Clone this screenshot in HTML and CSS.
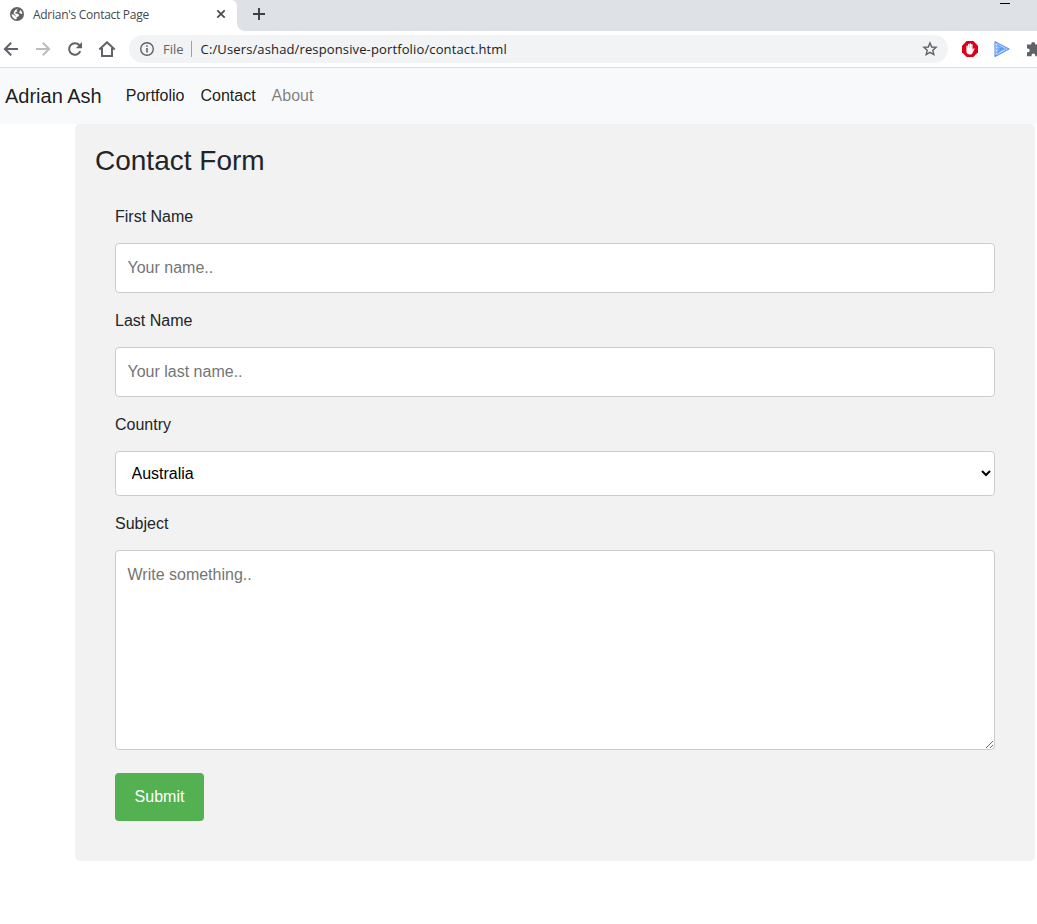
FILE: index.html
```html
<!DOCTYPE html>
<html lang="en">
<head>
<meta charset="utf-8">
<title>Adrian's Contact Page</title>
<link rel="stylesheet" href="styles.css">
</head>
<body>
<div class="tabstrip">
  <div class="tab">
    <svg class="globe" width="14" height="14" viewBox="0 0 14 14"><circle cx="7" cy="7" r="7" fill="#5f6368"/><path d="M8.300 1.500 6.600 3 7.500 4.500 5.600 5.100 5.200 6.500 8 6.700 9.200 8.200 8 9.700 6.800 10.100 6.500 12.300C4 12.200 1.800 10 1.600 7.200L4.200 7.700 5.100 9.400 5.800 8.900 4.400 6.900 3.600 6.500C4 4 5.400 2 8.300 1.500ZM10.200 2.900C11.800 4 12.400 5.600 12.300 6.900L10.500 6.400 9.100 6Z" fill="#fff"/></svg>
    <span class="tab-title">Adrian's Contact Page</span>
    <svg class="close" width="10" height="10" viewBox="0 0 10 10"><path d="M1.3 1.3 8.7 8.7M8.7 1.3 1.3 8.7" stroke="#46494d" stroke-width="1.7"/></svg>
  </div>
  <div class="strip">
    <svg width="12" height="12" viewBox="0 0 12 12"><path d="M6 0V12M0 6H12" stroke="#3c4043" stroke-width="1.9"/></svg>
    <span class="minimize"></span>
  </div>
</div>
<div class="toolbar">
  <div class="nav-buttons">
    <svg width="16" height="16" viewBox="0 0 16 16"><path d="M15 8H2M8.2 1.7 1.900 8l6.300 6.300" fill="none" stroke="#5f6368" stroke-width="2"/></svg>
    <svg width="16" height="16" viewBox="0 0 16 16"><path d="M1 8h13M7.800 1.700 14.100 8l-6.300 6.300" fill="none" stroke="#babcbe" stroke-width="2"/></svg>
    <svg width="16" height="16" viewBox="0 0 16 16"><path d="M13.300 10.200A5.800 5.800 0 1 1 12.400 4.200L14 5.800" fill="none" stroke="#5f6368" stroke-width="2"/><path d="M15 1v6.200H8.800Z" fill="#5f6368"/></svg>
    <svg width="18" height="16" viewBox="0 0 18 16"><path d="M1.300 8.600 9 1.300l7.700 7.300M4 7v8h10V7" fill="none" stroke="#5f6368" stroke-width="2"/></svg>
  </div>
  <div class="address">
    <svg width="14" height="14" viewBox="0 0 14 14"><circle cx="7" cy="7" r="6.300" fill="none" stroke="#5f6368" stroke-width="1.400"/><path d="M7 6v4.500M7 3.300v1.500" stroke="#5f6368" stroke-width="1.600"/></svg>
    <span class="scheme">File</span>
    <span class="divider"></span>
    <span class="url">C:/Users/ashad/responsive-portfolio/contact.html</span>
    <svg class="star" width="16" height="16" viewBox="0 0 16 16"><path d="m8 1.900 1.700 4.100 4.400.4-3.300 2.900 1 4.300L8 11.300l-3.800 2.300 1-4.300-3.300-2.900 4.400-.4Z" fill="none" stroke="#5f6368" stroke-width="1.400"/></svg>
  </div>
  <div class="extensions">
    <svg width="16" height="16" viewBox="0 0 16 16"><path d="M4.700 0h6.600L16 4.700v6.600L11.300 16H4.700L0 11.300V4.700Z" fill="#db0019"/><path d="M4.400 8.500V5.200a.7.7 0 0 1 1.400 0V7h.2V3.500a.7.7 0 0 1 1.400 0V7h.2V2.900a.7.7 0 0 1 1.400 0V7h.2V3.700a.7.7 0 0 1 1.400 0v5l.9-1.200c.5-.5 1.300-.2 1 .5l-2 4c-.4 1-1.200 1.600-2.500 1.600C5.500 13.600 4.400 12 4.400 10Z" fill="#fff"/></svg>
    <svg width="16" height="16" viewBox="0 0 16 16"><path d="M1 .8 15 8 1 15.400Z" fill="#d3e5ff" stroke="#5b8ff5" stroke-width="1.100" stroke-linejoin="round"/><path d="M3.500 3.500 12 8 3.500 12.500Z" fill="#7db9f7"/><path d="M1 .8 8 7.500 1 15M3 4v8M5 8h7M4 11l5-5" fill="none" stroke="#4b7bea" stroke-width=".8" stroke-dasharray="2 1"/></svg>
    <svg width="16" height="16" viewBox="0 0 16 16"><path d="M1 3.500h4.200V3a2 2 0 0 1 4 0v.5H13v4h.8a2 2 0 0 1 0 4H13v3.800H9.300v-.8a1.900 1.900 0 0 0-3.800 0v.8H1v-4.100h.8a1.900 1.900 0 0 0 0-3.800H1Z" fill="#5f6368"/></svg>
  </div>
</div>
<nav class="navbar">
  <a class="brand">Adrian Ash</a>
  <a class="nav-link">Portfolio</a>
  <a class="nav-link">Contact</a>
  <a class="nav-link muted">About</a>
</nav>
<main class="container">
  <h3>Contact Form</h3>
  <form class="form">
    <label for="fname">First Name</label>
    <input class="field" type="text" id="fname" placeholder="Your name..">
    <label for="lname">Last Name</label>
    <input class="field" type="text" id="lname" placeholder="Your last name..">
    <label for="country">Country</label>
    <select class="field select" id="country"><option>Australia</option></select>
    <label for="subject">Subject</label>
    <textarea class="field message" id="subject" placeholder="Write something.."></textarea>
    <input class="submit" type="submit" value="Submit">
  </form>
</main>
</body>
</html>
```
FILE: styles.css
```css
* { box-sizing: border-box; }
body {
  margin: 0;
  height: 924px;
  overflow: hidden;
  background: #fff;
  color: #212529;
  font: 16px/24px "Liberation Sans", Arial, sans-serif;
}
svg { display: block; flex: none; }

.tabstrip { display: flex; height: 31px; background: linear-gradient(90deg, #fff 230px, #dee1e6 230px); }
.tab {
  display: flex;
  align-items: center;
  width: 237px;
  height: 31px;
  padding: 0 11px 3px 10px;
  background: #fff;
  border-top-right-radius: 6px;
}
.tab-title {
  margin-left: 9px;
  padding-top: 1px;
  font: 12px/16px "Open Sans", sans-serif;
  letter-spacing: -0.28px;
  color: #45484c;
  white-space: nowrap;
}
.close { margin-left: auto; }
.strip {
  display: flex;
  justify-content: space-between;
  flex: 1;
  padding: 8px 27px 0 16px;
  background: #dee1e6;
  border-bottom-left-radius: 8px;
}
.tabstrip { background: linear-gradient(#dee1e6 15px, #fff 15px); }
.minimize { width: 10px; height: 1px; margin-top: -5px; background: #000; }

.toolbar {
  display: flex;
  align-items: center;
  height: 37px;
  padding-left: 3px;
  border-bottom: 1px solid #d9dce0;
}
.nav-buttons { display: flex; flex: none; gap: 16px; width: 126px; }
.nav-buttons svg:last-child { margin-left: -1px; }
.address {
  display: flex;
  flex: none;
  align-items: center;
  width: 819px;
  height: 28px;
  padding: 0 10px 0 11px;
  border-radius: 14px;
  background: #f1f3f4;
  font: 13px/20px "Open Sans", sans-serif;
  white-space: nowrap;
}
.scheme { margin-left: 9px; color: #5f6368; }
.divider { width: 1px; height: 16px; margin: 0 9px 0 7px; background: #9aa0a6; }
.url { color: #202124; letter-spacing: 0.13px; }
.star { margin-left: auto; }
.extensions { display: flex; flex: none; gap: 16px; margin-left: 14px; }

.navbar { display: flex; align-items: center; height: 56px; padding-left: 5px; background: #f8f9fa; }
.brand { margin-right: 16px; font-size: 20px; line-height: 30px; color: rgba(0, 0, 0, .9); }
.nav-link { padding: 8px; color: rgba(0, 0, 0, .9); }
.muted { color: rgba(0, 0, 0, .5); }

.container {
  width: 960px;
  height: 737px;
  margin-left: 75px;
  padding: 20px;
  border-radius: 5px;
  background: #f2f2f2;
}
h3 { margin: 0 0 8px; font-size: 28px; font-weight: 500; line-height: 33px; }
.form { padding: 20px; }
label { display: block; height: 24px; margin-bottom: 14px; }
.field {
  display: block;
  width: 100%;
  height: 50px;
  margin: 0 0 16px;
  padding: 12px 12px 12px 11.5px;
  border: 1px solid #ccc;
  border-radius: 4px;
  background: #fff;
  font: inherit;
}
.select { height: 45px; padding-right: 13px; color: #000; }
.message { height: 200px; margin-bottom: 23px; resize: vertical; }
.submit {
  display: block;
  width: 89px;
  height: 48px;
  padding: 12px 19.5px;
  border: 0;
  border-radius: 4px;
  background: #54b151;
  color: #fff;
  font: inherit;
}
```
